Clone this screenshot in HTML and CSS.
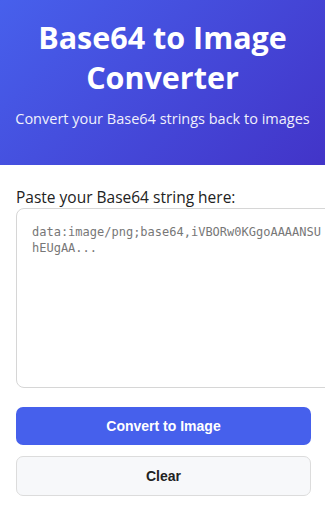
FILE: index.html
```html
<!DOCTYPE html>
<html lang="en">
<head>
    <meta charset="UTF-8">
    <meta name="viewport" content="width=device-width, initial-scale=1.0">
    <title>Base64 to Image Converter</title>
    <link rel="stylesheet" href="styles.css">
</head>
<body>

    <header class="hero">
        <h1>Base64 to Image Converter</h1>
        <p>Convert your Base64 strings back to images</p>
    </header>

    <main class="converter">
        <label for="base64-input">Paste your Base64 string here:</label>
        <textarea id="base64-input" placeholder="data:image/png;base64,iVBORw0KGgoAAAANSUhEUgAA..."></textarea>

        <button id="convert-button" class="btn btn-primary">Convert to Image</button>
        <button id="clear-button" class="btn btn-light">Clear</button>
    </main>

</body>
</html>
```

FILE: styles.css
```css
body {
    margin: 0;
    font-family: "Open Sans", sans-serif;
    background: #ffffff;
    color: #222222;
    overflow: hidden;
}

.hero {
    background: linear-gradient(135deg, #4760ec, #4234c8);
    color: #ffffff;
    text-align: center;
    padding: 17px 10px 26px;
    height: 122px;
}

.hero h1 {
    font-size: 30.5px;
    line-height: 40px;
    font-weight: 700;
    margin: 0 0 12px;
}

.hero p {
    font-size: 14.5px;
    margin: 0;
    opacity: 0.92;
}

.converter {
    display: flex;
    flex-direction: column;
    padding: 22px 14px 0 16px;
}

label {
    font-size: 15.5px;
    line-height: 20px;
    margin-bottom: 1px;
}

textarea {
    width: 100%;
    height: 148px;
    padding: 15px;
    border: 1px solid #d6d6d6;
    border-radius: 8px;
    font-family: "DejaVu Sans Mono", monospace;
    font-size: 12px;
    line-height: 16px;
    resize: none;
    margin-bottom: 19px;
}

textarea::placeholder {
    color: #777777;
}

.btn {
    height: 38px;
    border-radius: 7px;
    font-family: "Liberation Sans", Arial, sans-serif;
    font-size: 14px;
    font-weight: 700;
    cursor: pointer;
}

.btn-primary {
    background: #4660ec;
    color: #ffffff;
    border: none;
    margin-bottom: 11px;
}

.btn-light {
    background: #f7f8fa;
    color: #222222;
    border: 1px solid #dcdcdc;
    height: 40px;
}
```
